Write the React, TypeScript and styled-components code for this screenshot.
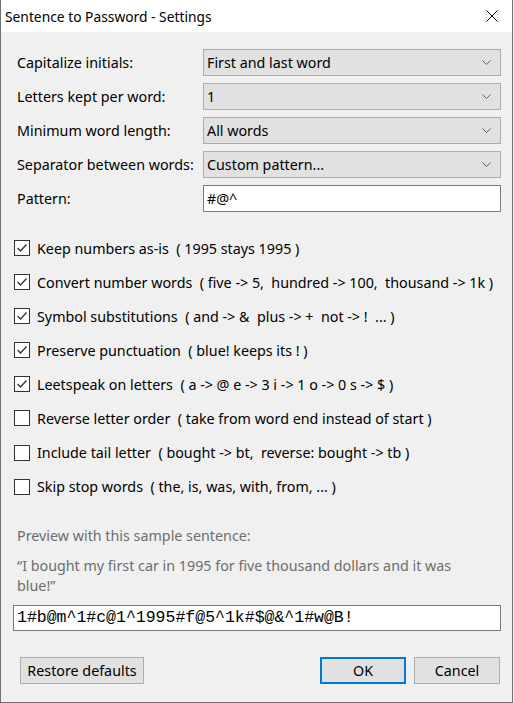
import React, { useState } from "react";
import styled, { createGlobalStyle } from "styled-components";

const Global = createGlobalStyle`
  html, body { margin: 0; padding: 0; background: #f0f0f0; }
  body { font-family: "Noto Sans", "Open Sans", sans-serif; }
  * { box-sizing: border-box; }
`;

const Window = styled.div`
  width: 513px;
  height: 703px;
  display: flex;
  flex-direction: column;
  background: #f0f0f0;
  border-left: 1px solid #707070;
  border-right: 1px solid #707070;
  border-bottom: 1px solid #707070;
  color: #000;
  font-size: 14.3px;
`;

const TitleBar = styled.div`
  height: 32px;
  flex: none;
  background: #fff;
  display: flex;
  align-items: center;
  justify-content: space-between;
  padding-left: 4px;
  padding-right: 14px;
  font-size: 13.8px;
`;

const CloseButton = styled.button`
  border: none;
  background: transparent;
  padding: 0;
  width: 12px;
  height: 12px;
  display: flex;
  align-items: center;
  justify-content: center;
`;

const Body = styled.div`
  flex: 1;
  display: flex;
  flex-direction: column;
  padding: 17px 12px 0 12px;
`;

const FormGrid = styled.div`
  display: grid;
  grid-template-columns: 186px 298px;
  grid-auto-rows: 27px;
  row-gap: 7px;
  align-items: center;
  padding-left: 4px;
`;

const Label = styled.label`
  white-space: nowrap;
`;

const Combo = styled.div`
  height: 27px;
  display: flex;
  align-items: center;
  justify-content: space-between;
  background: #e1e1e1;
  border: 1px solid #adadad;
  padding: 0 9px 0 3px;
`;

const TextBox = styled.div<{ $mono?: boolean }>`
  height: 27px;
  display: flex;
  align-items: center;
  background: #fff;
  border: 1px solid #7a7a7a;
  padding: 0 3px;
  font-family: ${(p) => (p.$mono ? '"Liberation Mono", monospace' : "inherit")};
  font-size: ${(p) => (p.$mono ? "16.5px" : "inherit")};
  white-space: pre;
`;

const CheckList = styled.div`
  display: flex;
  flex-direction: column;
  gap: 8.1px;
  margin-top: 23px;
`;

const CheckRow = styled.label`
  height: 26px;
  display: flex;
  align-items: center;
  gap: 7px;
  padding-left: 1px;
  white-space: pre;
  cursor: default;
`;

const Box = styled.span`
  width: 16px;
  height: 16px;
  flex: none;
  border: 1px solid #333;
  background: #fff;
  display: flex;
  align-items: center;
  justify-content: center;
`;

const Preview = styled.div`
  margin-top: 26px;
  padding-left: 4px;
  color: #6d6d6d;
  display: flex;
  flex-direction: column;
`;

const PreviewTitle = styled.div`
  line-height: 20px;
`;

const Sample = styled.div`
  margin-top: 10px;
  line-height: 20px;
`;

const OutputBox = styled(TextBox)`
  margin-top: 9px;
  height: 26px;
  width: 488px;
  padding-left: 3px;
`;

const Footer = styled.div`
  display: flex;
  align-items: center;
  margin-top: 26px;
  padding-left: 7px;
  gap: 8px;
`;

const Button = styled.button<{ $primary?: boolean; $width: number }>`
  height: 27px;
  width: ${(p) => p.$width}px;
  background: #e1e1e1;
  border: ${(p) => (p.$primary ? "2px solid #0078d7" : "1px solid #adadad")};
  font-family: inherit;
  font-size: 14.3px;
  color: #000;
  padding: 0;
`;

const Spacer = styled.div`
  flex: 1;
`;

const Chevron = () => (
  <svg width="9" height="5" viewBox="0 0 9 5">
    <path d="M0.5 0.5 L4.5 4.5 L8.5 0.5" fill="none" stroke="#606060" strokeWidth="1" />
  </svg>
);

const combos = [
  { label: "Capitalize initials:", value: "First and last word" },
  { label: "Letters kept per word:", value: "1" },
  { label: "Minimum word length:", value: "All words" },
  { label: "Separator between words:", value: "Custom pattern..." },
];

const options = [
  { label: "Keep numbers as-is", hint: "( 1995 stays 1995 )", on: true },
  { label: "Convert number words", hint: "( five -> 5,  hundred -> 100,  thousand -> 1k )", on: true },
  { label: "Symbol substitutions", hint: "( and -> &  plus -> +  not -> !  ... )", on: true },
  { label: "Preserve punctuation", hint: "( blue! keeps its ! )", on: true },
  { label: "Leetspeak on letters", hint: "( a -> @ e -> 3 i -> 1 o -> 0 s -> $ )", on: true },
  { label: "Reverse letter order", hint: "( take from word end instead of start )", on: false },
  { label: "Include tail letter", hint: "( bought -> bt,  reverse: bought -> tb )", on: false },
  { label: "Skip stop words", hint: "( the, is, was, with, from, ... )", on: false },
];

export default function App() {
  const [checks, setChecks] = useState(options.map((o) => o.on));
  return (
    <>
      <Global />
      <Window>
        <TitleBar>
          <span>Sentence to Password - Settings</span>
          <CloseButton aria-label="Close">
            <svg width="12" height="12" viewBox="0 0 12 12">
              <path d="M0.5 0.5 L11.5 11.5 M11.5 0.5 L0.5 11.5" stroke="#000" strokeWidth="1" />
            </svg>
          </CloseButton>
        </TitleBar>
        <Body>
          <FormGrid>
            {combos.map((c) => (
              <React.Fragment key={c.label}>
                <Label>{c.label}</Label>
                <Combo>
                  <span>{c.value}</span>
                  <Chevron />
                </Combo>
              </React.Fragment>
            ))}
            <Label>Pattern:</Label>
            <TextBox>#@^</TextBox>
          </FormGrid>

          <CheckList>
            {options.map((o, i) => (
              <CheckRow
                key={o.label}
                onClick={() => setChecks((s) => s.map((v, j) => (j === i ? !v : v)))}
              >
                <Box>
                  {checks[i] && (
                    <svg width="12" height="10" viewBox="0 0 12 10">
                      <path d="M1.5 5 L4.5 8 L10.5 1.5" fill="none" stroke="#333" strokeWidth="1.3" />
                    </svg>
                  )}
                </Box>
                <span>{`${o.label}  ${o.hint}`}</span>
              </CheckRow>
            ))}
          </CheckList>

          <Preview>
            <PreviewTitle>Preview with this sample sentence:</PreviewTitle>
            <Sample>
              “I bought my first car in 1995 for five thousand dollars and it was
              <br />
              blue!”
            </Sample>
          </Preview>
          <OutputBox $mono>1#b@m^1#c@1^1995#f@5^1k#$@&^1#w@B!</OutputBox>

          <Footer>
            <Button $width={124}>Restore defaults</Button>
            <Spacer />
            <Button $primary $width={86}>OK</Button>
            <Button $width={86}>Cancel</Button>
          </Footer>
        </Body>
      </Window>
    </>
  );
}
